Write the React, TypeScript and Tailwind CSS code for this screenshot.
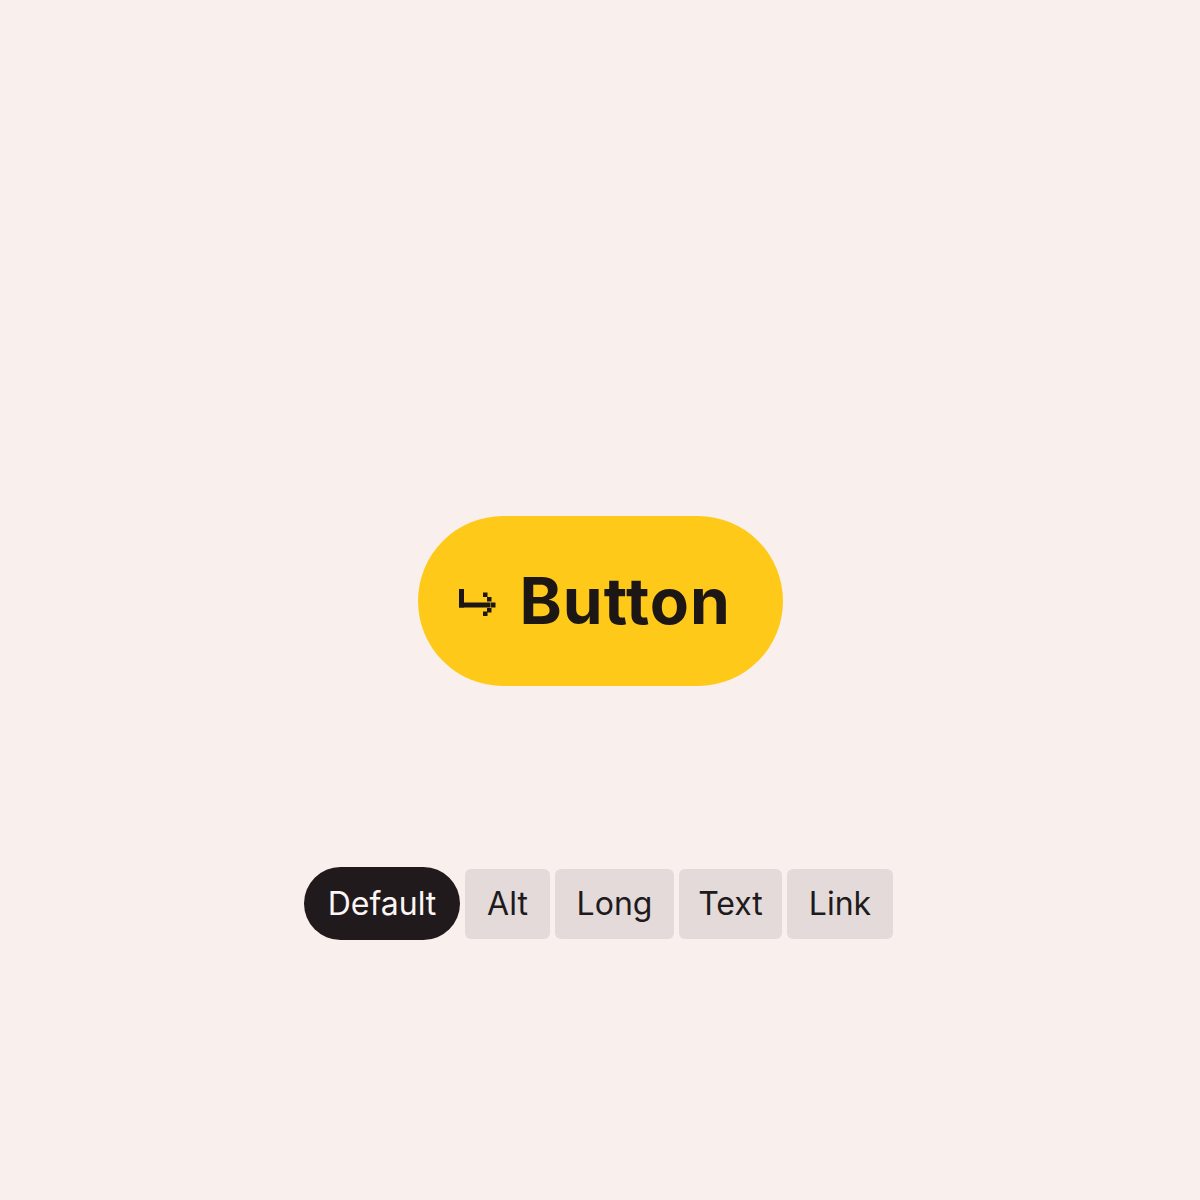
import React from "react";

function PixelArrow() {
  return (
    <svg width="37" height="27" viewBox="0 0 37 27" fill="#1c1715">
      <rect x="0" y="0" width="5" height="18.5" />
      <rect x="0" y="13.5" width="31" height="5" />
      <rect x="24" y="3.5" width="4.5" height="4.5" />
      <rect x="28" y="8" width="4.5" height="4.5" />
      <rect x="31.5" y="13.5" width="5" height="5" />
      <rect x="28" y="19" width="4.5" height="4.5" />
      <rect x="24" y="22.5" width="4.5" height="4.5" />
    </svg>
  );
}

const tabs = [
  { label: "Alt", w: "w-[85px]" },
  { label: "Long", w: "w-[119px]" },
  { label: "Text", w: "w-[103px]" },
  { label: "Link", w: "w-[106px]" },
];

export default function App() {
  return (
    <div
      className="w-[1200px] h-[1200px] bg-[#f9f0ee] flex flex-col items-center"
      style={{ fontFamily: "Inter, 'Noto Sans', sans-serif" }}
    >
      <div className="mt-[516px] h-[170px] w-[365px] rounded-full bg-[#ffc919] flex items-center pl-[41px]">
        <div className="mt-[2px]">
          <PixelArrow />
        </div>
        <span className="ml-[24px] text-[64px] font-bold leading-none text-[#1c1715] tracking-[1px]">
          Button
        </span>
      </div>
      <div className="mt-[181px] flex items-center gap-[5px] mr-[3px]">
        <div className="h-[73px] w-[156px] rounded-full bg-[#201a1c] text-[#fbf5f4] text-[32px] flex items-center justify-center">
          Default
        </div>
        {tabs.map((t) => (
          <div
            key={t.label}
            className={`h-[70px] ${t.w} rounded-[6px] bg-[#e3dad9] text-[#201a1c] text-[32px] flex items-center justify-center`}
          >
            {t.label}
          </div>
        ))}
      </div>
    </div>
  );
}
